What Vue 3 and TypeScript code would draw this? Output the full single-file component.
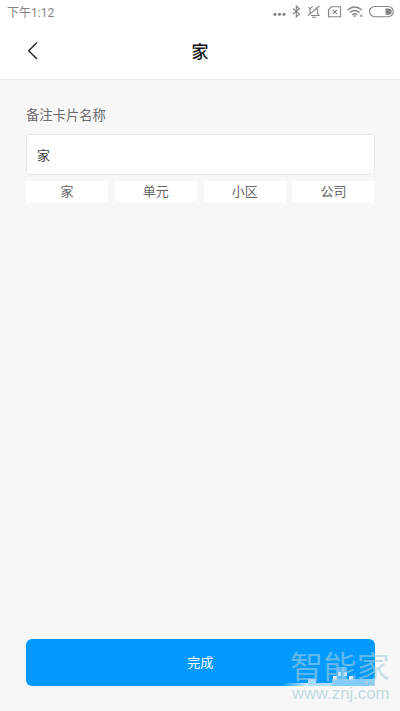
<script setup lang="ts">
import { ref } from 'vue'

const name = ref<string>('家')
const presets: string[] = ['家', '单元', '小区', '公司']
</script>

<template>
  <div class="screen">
    <div class="status">
      <span class="time">下午1:12</span>
      <svg class="icons" width="126" height="18" viewBox="270 3 126 18" fill="none" stroke="#858585" stroke-width="1.1">
        <g fill="#858585" stroke="none">
          <circle cx="275" cy="14.300" r="1.600" /><circle cx="279.500" cy="14.300" r="1.600" /><circle cx="284" cy="14.300" r="1.600" />
        </g>
        <path d="M293 8.500l6.500 5.500-3.200 3V6l3.200 2.700-6.500 5.300" />
        <path d="M310 13.500V9.500q.5-2.500 3-3M315.500 7.500q2 1 2 3v2.500l1.500 2.500h-8M308.500 7l1.500 2M307.800 15.800L319.500 6M312 17.300h4" />
        <path d="M331.500 6.800h9v10h-12v-7zM332.800 9.800l4 4M336.800 9.800l-4 4" />
        <path d="M347.500 10q7.200-6 14.400 0M349.800 12.500q4.900-4 9.800 0M352.300 14.800q2.400-2 4.800 0" stroke-width="1.400" />
        <path d="M353 15.500h3.400l-1.700 1.800z" fill="#858585" stroke="none" />
        <rect x="360" y="14.500" width="2.500" height="2.500" fill="#b0b0b0" stroke="none" />
        <rect x="369.500" y="6.500" width="23.800" height="10.200" rx="5.100" />
        <path d="M385.500 8.400h3a3.200 3.200 0 0 1 0 6.400h-3z" fill="#858585" stroke="none" />
      </svg>
    </div>
    <header class="nav">
      <svg class="back" width="12" height="20" viewBox="0 0 12 20" fill="none" stroke="#222" stroke-width="1.400">
        <path d="M10 1.500L1.700 9.700 10 17.900" />
      </svg>
      <h1>{{ name }}</h1>
    </header>
    <main class="content">
      <label class="label" for="card-name">备注卡片名称</label>
      <input id="card-name" v-model="name" class="field" type="text">
      <div class="presets">
        <button v-for="item in presets" :key="item" class="preset" @click="name = item">{{ item }}</button>
      </div>
      <button class="done">完成</button>
    </main>
    <div class="mark">
      <svg width="104" height="60" viewBox="0 0 104 60">
        <defs>
          <linearGradient id="haze" x1="0" x2="1" y1="0" y2="0">
            <stop offset="0" stop-color="#d9effc" stop-opacity="0" />
            <stop offset="1" stop-color="#d9effc" />
          </linearGradient>
        </defs>
        <rect x="-8" y="33" width="26" height="3" fill="url(#haze)" />
        <g fill="#d9effc">
          <rect x="18" y="29" width="8" height="7" opacity=".8" />
          <rect x="26" y="33" width="16" height="3" opacity=".8" />
          <rect x="42" y="29" width="43" height="7" opacity=".6" />
          <rect x="48" y="17" width="9" height="12" opacity=".4" />
          <rect x="43" y="26" width="4" height="4" /><rect x="48" y="22" width="3" height="4" opacity=".8" />
          <rect x="54" y="22" width="3" height="4" opacity=".8" /><rect x="59" y="26" width="4" height="4" />
        </g>
        <path d="M75 31h3v3h-3zM80 30h3v2h-3zM82 33h3v3h-3z" fill="#a9cbdc" />
      </svg>
      <span class="brand">智能家</span>
      <span class="url">www.znj.com</span>
    </div>
  </div>
</template>

<style>
body {
  margin: 0;
}
</style>

<style scoped>
.screen {
  position: relative;
  display: flex;
  flex-direction: column;
  width: 400px;
  height: 711px;
  overflow: hidden;
  background: #f7f7f7;
  font-family: Roboto, "Noto Sans CJK SC", sans-serif;
}
.status {
  display: flex;
  justify-content: space-between;
  height: 24px;
  padding: 0 4px 0 7px;
  background: #fff;
}
.time {
  font-size: 12px;
  line-height: 26px;
  color: #858585;
}
.icons {
  margin-top: 3px;
}
.nav {
  display: grid;
  grid-template-columns: 26px 1fr 26px;
  align-items: center;
  box-sizing: border-box;
  height: 55.500px;
  background: #fff;
  border-bottom: 1px solid #e9e9e9;
}
.back {
  margin-left: 27px;
}
h1 {
  margin: 0;
  padding-top: 2px;
  font-size: 17px;
  font-weight: 500;
  line-height: 24px;
  text-align: center;
  color: #111;
}
.content {
  display: flex;
  flex: 1;
  flex-direction: column;
  padding: 26.500px 25.500px 25.500px 26px;
}
.label {
  font-size: 13.300px;
  line-height: 20px;
  color: #6b6b6b;
}
.field {
  box-sizing: border-box;
  width: 100%;
  height: 41px;
  margin-top: 8px;
  padding: 0 10px;
  border: 1px solid #e7e7e7;
  border-radius: 3px;
  outline: none;
  background: #fff;
  font: inherit;
  font-size: 13px;
  color: #3c3c3c;
}
.presets {
  display: grid;
  grid-template-columns: repeat(4, 82px);
  justify-content: space-between;
  margin-top: 6px;
}
.preset {
  height: 21px;
  padding: 0;
  border: 0;
  background: #fff;
  font: inherit;
  font-size: 13px;
  line-height: 21px;
  color: #666;
}
.done {
  height: 47px;
  margin-top: auto;
  padding: 0 0 2px;
  border: 0;
  border-radius: 6px;
  background: #0099ff;
  font: inherit;
  font-size: 13px;
  color: #fff;
}
.mark {
  position: absolute;
  left: 290px;
  top: 650px;
  width: 104px;
  height: 60px;
  pointer-events: none;
}
.mark svg {
  display: block;
  overflow: visible;
}
.brand {
  position: absolute;
  left: 0;
  top: 0;
  font: 33.300px/32px "Noto Sans CJK SC", sans-serif;
  white-space: nowrap;
  transform: scaleY(0.92);
  transform-origin: 0 0;
  color: rgba(165, 208, 218, 0.6);
}
.url {
  position: absolute;
  left: 2px;
  top: 36px;
  font: 16.700px/16px "Liberation Sans", sans-serif;
  color: #c3d9df;
}
</style>
